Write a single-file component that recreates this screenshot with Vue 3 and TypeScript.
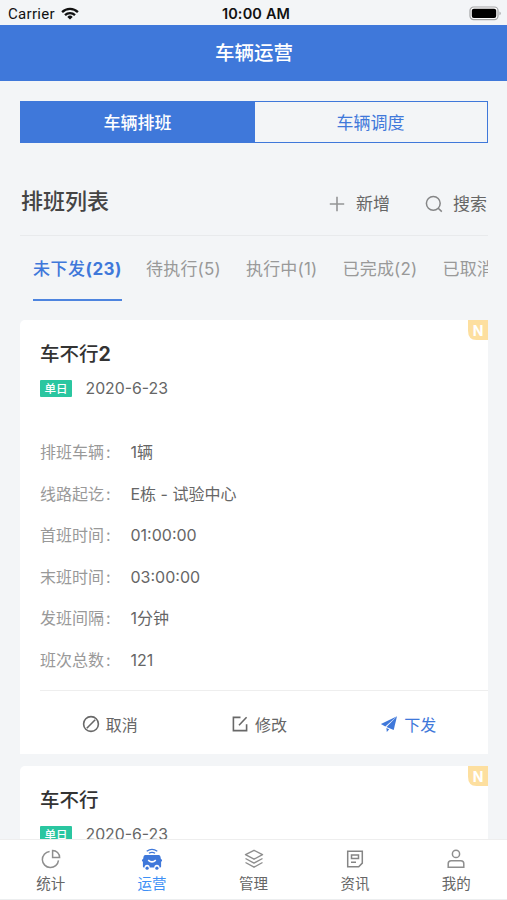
<script setup lang="ts">
import { ref } from 'vue'

interface Tab { label: string; count: number }
interface Row { label: string; value: string }
interface Schedule { name: string; suffix: string; date: string; rows: Row[] }

const modes: string[] = ['车辆排班', '车辆调度']
const mode = ref(0)
const tab = ref(0)
const page = ref('运营')

const tabs: Tab[] = [
  { label: '未下发', count: 23 },
  { label: '待执行', count: 5 },
  { label: '执行中', count: 1 },
  { label: '已完成', count: 2 },
  { label: '已取消', count: 4 },
]

const rows: Row[] = [
  { label: '排班车辆', value: '1辆' },
  { label: '线路起讫', value: 'E栋 - 试验中心' },
  { label: '首班时间', value: '01:00:00' },
  { label: '末班时间', value: '03:00:00' },
  { label: '发班间隔', value: '1分钟' },
  { label: '班次总数', value: '121' },
]

const schedules: Schedule[] = [
  { name: '车不行', suffix: '2', date: '2020-6-23', rows },
  { name: '车不行', suffix: '', date: '2020-6-23', rows: [] },
]

const pages: string[] = ['统计', '运营', '管理', '资讯', '我的']
</script>

<template>
  <div class="screen">
    <div class="status">
      <div class="carrier">
        <span>Carrier</span>
        <svg width="18" height="13" viewBox="0 0 18 13">
          <g fill="none" stroke="#111" stroke-width="2.3">
            <path d="M1.1 5.1a11.3 11.3 0 0 1 15.8 0" />
            <path d="M4 8.1a7.2 7.2 0 0 1 10 0" />
          </g>
          <path d="M9 12.6 6.3 9.9a3.9 3.9 0 0 1 5.4 0z" fill="#111" />
        </svg>
      </div>
      <b class="clock">10:00 AM</b>
      <div class="power">
        <svg width="33" height="15" viewBox="0 0 33 15">
          <rect x="1" y="1" width="28" height="12.6" rx="3.6" fill="#fff" stroke="#a3a4a5" stroke-width="1.2" />
          <rect x="2.8" y="2.7" width="24.4" height="9.2" rx="2" fill="#000" />
          <path d="M30.5 5.4c1.7.6 1.7 3.2 0 3.8z" fill="#a3a4a5" />
        </svg>
      </div>
    </div>
    <header class="title">车辆运营</header>

    <main class="content">
      <div class="segment">
        <button v-for="(m, i) in modes" :key="m" :class="{ on: mode === i }" @click="mode = i">{{ m }}</button>
      </div>

      <div class="list-head">
        <h2>排班列表</h2>
        <div class="tools">
          <span class="tool">
            <svg width="16" height="16" viewBox="0 0 16 16" fill="none" stroke="#949596" stroke-width="1.6"><path d="M8 .8v14.4M.8 8h14.4" /></svg>
            新增
          </span>
          <span class="tool search">
            <svg width="18" height="18" viewBox="0 0 18 18" fill="none" stroke="#858687" stroke-width="1.5"><circle cx="8.3" cy="8.3" r="6.9" /><path d="m13.2 13.2 3.6 3.4" /></svg>
            搜索
          </span>
        </div>
      </div>

      <nav class="tabs">
        <span v-for="(t, i) in tabs" :key="t.label" :class="['tab', { on: tab === i }]" @click="tab = i">{{ t.label }}<span class="count">({{ t.count }})</span></span>
      </nav>

      <article v-for="(s, n) in schedules" :key="n" class="card">
        <span class="new">
          <svg width="20" height="20" viewBox="0 0 20 20"><path d="M0 0h20v20H8.5Q0 20 0 10.5z" fill="#fddf9f" /></svg>
          <b>N</b>
        </span>
        <h3>{{ s.name }}<b v-if="s.suffix">{{ s.suffix }}</b></h3>
        <div class="meta"><span class="tag">单日</span><span class="date">{{ s.date }}</span></div>
        <template v-if="s.rows.length">
          <dl>
            <div v-for="r in s.rows" :key="r.label" class="row"><dt>{{ r.label }}<span class="colon">:</span></dt><dd>{{ r.value }}</dd></div>
          </dl>
          <footer>
            <span class="action">
              <svg width="18" height="18" viewBox="0 0 18 18" fill="none" stroke="#686868" stroke-width="1.6"><circle cx="9" cy="9" r="7.4" /><path d="M4.8 13.2 13.2 4.8" /></svg>
              取消
            </span>
            <span class="action">
              <svg width="18" height="18" viewBox="0 0 18 18" fill="none" stroke="#686868" stroke-width="1.6"><path d="M9.5 2.4H2.4v13.2h13.2V9.2M8 10.2l7.6-7.9" /></svg>
              修改
            </span>
            <span class="action send">
              <svg width="18" height="18" viewBox="0 0 18 18" fill="#3f78da"><path d="M17 1.2.9 9.1l4.4 2.4z" /><path d="M17 1.2 6.5 12.1l7.2 3z" /><path d="m6.4 13 2.8 1.2-2.4 2.8z" /></svg>
              下发
            </span>
          </footer>
        </template>
      </article>
    </main>

    <nav class="bottom">
      <div v-for="(p, i) in pages" :key="p" :class="['page', { on: page === p }]" @click="page = p">
        <svg v-if="i === 0" width="22" height="22" viewBox="0 0 22 22" fill="none" stroke="#8e8e8e" stroke-width="1.5">
          <path d="M9.6 3.4a8.1 8.1 0 1 0 8.9 9" /><path d="M12.6 2.4v7h7a7 7 0 0 0-7-7z" />
        </svg>
        <svg v-else-if="i === 1" width="22" height="24" viewBox="0 0 22 24">
          <g fill="none" stroke="#3f78da" stroke-width="1.2"><path d="M5.7 3.2q5.3-3.7 10.6 0M7.9 5.3q3.1-1.8 6.2 0" /></g>
          <path d="M4.2 7h13.6q1.4.2 1.6 1.5l.5 2.6q1.2.2 1.2 1.4-.1 1-1 1.2v4.7q0 1-1 1h-.6a2.6 2.6 0 0 0-5.2 0H8.7a2.6 2.6 0 0 0-5.2 0h-.6q-1 0-1-1v-4.7q-.9-.2-1-1.2 0-1.2 1.2-1.4l.5-2.6Q2.8 7.2 4.2 7z" fill="#3f78da" />
          <path d="M7.2 12.2q3.8 3.5 7.6 0" fill="none" stroke="#fff" stroke-width="1.6" />
          <circle cx="6.1" cy="20.2" r="1.6" fill="#3f78da" /><circle cx="15.9" cy="20.2" r="1.6" fill="#3f78da" />
        </svg>
        <svg v-else-if="i === 2" width="22" height="22" viewBox="0 0 22 22" fill="none" stroke="#8e8e8e" stroke-width="1.4" stroke-linejoin="round">
          <path d="m11 2.3 8.5 4.4-8.5 4.5-8.5-4.5zM2.5 10.5l8.5 4.6 8.5-4.6M2.5 14.5l8.5 4.7 8.5-4.7" />
        </svg>
        <svg v-else-if="i === 3" width="22" height="22" viewBox="0 0 22 22" fill="none" stroke="#858585" stroke-width="1.5">
          <path d="M3.7 3.2h14.6v11.9l-3.6 3.7h-11zM7.5 6.9h7v3.7h-7zM7 14.2h5" />
        </svg>
        <svg v-else width="22" height="22" viewBox="0 0 22 22" fill="none" stroke="#8e8e8e" stroke-width="1.5">
          <circle cx="11" cy="5.9" r="3.6" /><path d="M3.2 19.2v-3.4q0-3 3-3h9.6q3 0 3 3v3.4z" />
        </svg>
        <span>{{ p }}</span>
      </div>
    </nav>
  </div>
</template>

<style>
body {
  margin: 0;
  background: #f3f5f7;
}
</style>

<style scoped>
* {
  box-sizing: border-box;
}
.screen {
  display: flex;
  flex-direction: column;
  width: 507px;
  height: 900px;
  overflow: hidden;
  background: #f3f5f7;
  font-family: Inter, "Noto Sans CJK SC", sans-serif;
  color: #666;
}
.status {
  display: grid;
  grid-template-columns: 1fr auto 1fr;
  align-items: center;
  flex: none;
  height: 25px;
  padding: 2px 5px 0 8px;
  font-family: Roboto, Inter, sans-serif;
  font-size: 15px;
  color: #111;
}
.carrier {
  display: flex;
  align-items: center;
  gap: 6px;
  letter-spacing: 0.3px;
}
.clock {
  padding-left: 2px;
  font: 600 14.5px/20px Inter, sans-serif;
  letter-spacing: 0.15px;
}
.power {
  display: flex;
  justify-content: flex-end;
}
.title {
  flex: none;
  height: 56px;
  background: #3f78da;
  color: #fff;
  text-align: center;
  padding-left: 1px;
  font-size: 19.5px;
  font-weight: 500;
  line-height: 57px;
}
.content {
  flex: 1;
  min-height: 0;
  overflow: hidden;
  padding: 20px 19px 0 20px;
}
.segment {
  display: flex;
  height: 42px;
  border: 1px solid #3f78da;
}
.segment button {
  flex: 1;
  border: 0;
  padding: 0 1px 2px 0;
  background: transparent;
  color: #3f78da;
  font-family: inherit;
  font-size: 17px;
}
.segment .on {
  flex: 0 0 234px;
  background: #3f78da;
  color: #fff;
  font-weight: 500;
}
.list-head {
  display: flex;
  justify-content: space-between;
  height: 93px;
  border-bottom: 1px solid #e8eaec;
}
h2 {
  margin: 0;
  padding: 42px 0 0 1px;
  font-size: 22px;
  line-height: 32px;
  font-weight: 500;
  color: #444;
}
.tools {
  display: flex;
  gap: 35px;
  padding: 49px 1px 0 0;
  font-size: 17px;
  line-height: 24px;
}
.tool {
  display: flex;
  align-items: center;
  height: 24px;
  gap: 11px;
}
.search {
  gap: 10px;
}
.tabs {
  display: flex;
  gap: 25px;
  height: 84px;
  padding-left: 13px;
  overflow: hidden;
  white-space: nowrap;
  font-size: 17px;
  letter-spacing: 0.2px;
  color: #999;
}
.tab {
  flex: none;
  height: 65px;
  line-height: 66px;
}
.tab.on {
  margin-right: -1px;
  color: #3f78da;
  font-weight: 500;
  letter-spacing: 0.5px;
  border-bottom: 2px solid #4d84df;
}
.on .count {
  font-weight: 700;
}
.card {
  position: relative;
  height: 434px;
  margin-bottom: 12px;
  padding: 20px 0 0 20px;
  border-radius: 5px 0 0 0;
  background: #fff;
}
.new {
  position: absolute;
  top: 0;
  right: 0;
  width: 20px;
  height: 20px;
}
.new svg {
  display: block;
}
.new b {
  position: absolute;
  inset: 0;
  text-align: center;
  font: 700 14px/21px Inter, sans-serif;
  color: #fff;
}
h3 {
  margin: 0;
  font-size: 19.5px;
  line-height: 29px;
  font-weight: 500;
  color: #333;
}
h3 b {
  font-weight: 700;
}
.meta {
  display: flex;
  align-items: center;
  gap: 13.5px;
  height: 20px;
  margin-top: 9px;
}
.tag {
  width: 32px;
  height: 17px;
  border-radius: 1px;
  background: #2ac6a0;
  color: #fff;
  text-align: center;
  font-size: 11.5px;
  line-height: 18px;
  font-weight: 500;
}
.date {
  font-size: 15.8px;
}
dl {
  margin: 34px 0 0;
}
.row {
  display: flex;
  height: 41.6px;
  font-size: 16px;
  line-height: 41.6px;
}
dt {
  width: 90.5px;
  color: #999;
}
.colon {
  margin-left: 2px;
}
dd {
  margin: 0;
}
footer {
  display: flex;
  height: 64px;
  margin-top: 8px;
  border-top: 1px solid #eee;
}
.action {
  display: flex;
  flex: 1;
  align-items: center;
  justify-content: center;
  gap: 6px;
  padding: 3px 10px 0 0;
  font-size: 16px;
}
.send {
  color: #3f78da;
}
.bottom {
  display: flex;
  flex: none;
  height: 61px;
  border-top: 1px solid #eee;
  border-bottom: 1px solid #eceeef;
  background: #fff;
}
.page {
  display: flex;
  flex: 1;
  flex-direction: column;
  align-items: center;
  justify-content: space-between;
  padding: 8px 0 4px;
  font-size: 14.5px;
  line-height: 22px;
}
.page.on {
  color: #3e90f5;
}
.page.on svg {
  margin-bottom: -2px;
}
</style>
